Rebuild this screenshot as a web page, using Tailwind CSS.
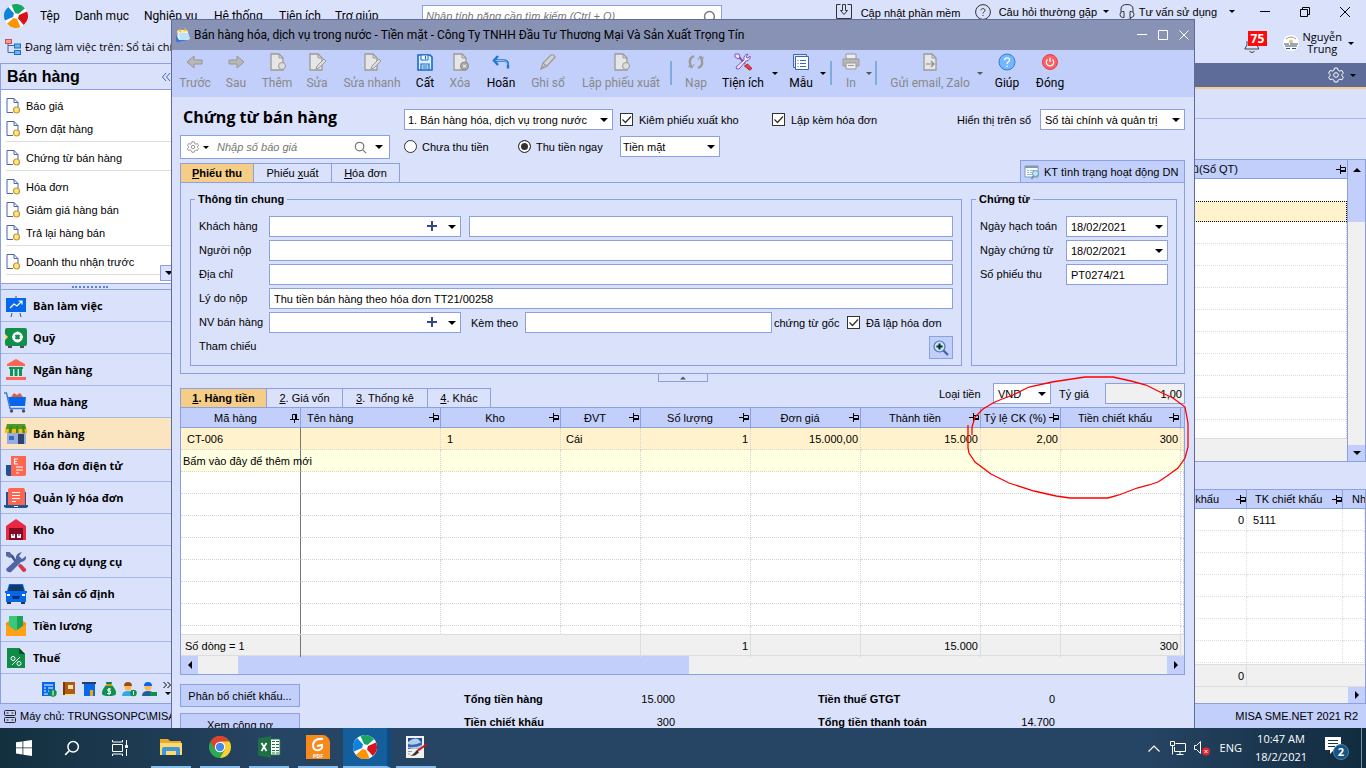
<!DOCTYPE html>
<html lang="vi">
<head>
<meta charset="utf-8">
<title>MISA SME.NET 2021 - Bán hàng</title>
<script src="https://cdn.jsdelivr.net/npm/@tailwindcss/browser@4"></script>
</head>
<body class="flex h-screen flex-col overflow-hidden bg-[#dae1fb] font-['Liberation_Sans',sans-serif] text-[11px] leading-4 text-black">

<!-- Shared symbols -->
<svg class="hidden" aria-hidden="true">
  <symbol id="down" viewBox="0 0 8 4"><path d="M0 0h8L4 4z" fill="currentColor"/></symbol>
  <symbol id="pin" viewBox="0 0 10 9"><path d="M0 4.500h4M4.500 0v9M4.500 2.500h5v4" fill="none" stroke="#000"/><path d="M4 6h6" stroke="#000" stroke-width="2"/></symbol>
  <symbol id="pinned" viewBox="0 0 9 10"><path d="M4.500 6v4M0 6.500h9M2.500 6V1.500h4" fill="none" stroke="#000"/><path d="M6 1v5" stroke="#000" stroke-width="2"/></symbol>
  <symbol id="doc" viewBox="0 0 14 16"><path d="M.5 14.500V.5h7l4 4v5M.5 14.500h6M7.500.5v4h4" fill="#fff" stroke="#4a64ad"/><circle cx="10" cy="12" r="3" fill="#ffe48a" stroke="#c39a2c" stroke-width="1.200"/></symbol>
  <symbol id="page" viewBox="0 0 16 18"><path d="M1 1h8l4 4v12H1z" fill="#e6e6e6" stroke="#9a9a9a" stroke-width="1.300"/><path d="M9 1v4h4" fill="none" stroke="#9a9a9a"/></symbol>
  <symbol id="misa" viewBox="0 0 24 24"><circle cx="12" cy="12" r="12" fill="#fff"/><path d="M7.500 1A12 12 0 0 1 21 4.200L14.500 10 11 9z" fill="#17a765"/><path d="M23 7.500A12 12 0 0 1 19.800 21L14 14.500 15 11z" fill="#d8121b"/><path d="M16.500 23A12 12 0 0 1 3 19.800L9.500 14 13 15z" fill="#fd9305"/><path d="M1 16.500A12 12 0 0 1 4.200 3L10 9.500 9 13z" fill="#0d84dc"/></symbol>
  <symbol id="gear" viewBox="0 0 16 16"><path d="M6.500 1h3l.6 2.200 1.600.9 2.200-.6 1.500 2.600L13.800 7.700v1l1.600 1.500-1.500 2.600-2.200-.6-1.600.9L9.500 15h-3l-.6-2-1.600-.9-2.200.6L.6 10.200l1.600-1.500v-1L.6 6.100l1.500-2.600 2.200.6 1.600-.9z" fill="none" stroke="currentColor"/><circle cx="8" cy="8" r="2.300" fill="none" stroke="currentColor"/></symbol>
  <symbol id="lens" viewBox="0 0 14 14"><circle cx="6" cy="6" r="4.600" fill="none" stroke="currentColor" stroke-width="1.300"/><path d="M9.500 9.500L13 13" stroke="currentColor" stroke-width="1.300"/></symbol>
  <symbol id="plus" viewBox="0 0 10 10"><path d="M5 0v10M0 5h10" stroke="#34498a" stroke-width="2"/></symbol>
  <symbol id="tick" viewBox="0 0 13 13"><path d="M2.500 6.500l3 3 5.500-6" fill="none" stroke="#333" stroke-width="1.300"/></symbol>
</svg>

<div class="relative min-h-0 flex-1 overflow-hidden">

  <!-- Main application window -->
  <div class="flex h-full flex-col">
    <header class="flex h-[63px] shrink-0 justify-between">
      <div>
        <div class="flex h-8 items-center">
          <svg class="ml-1 size-6"><use href="#misa"/></svg>
          <nav class="ml-3 flex gap-4 font-['Roboto',sans-serif] text-[12px] whitespace-nowrap">
            <a href="#" class="w-[19px]">Tệp</a><a href="#" class="w-[53px]">Danh mục</a><a href="#" class="w-[54px]">Nghiệp vụ</a><a href="#" class="w-[49px]">Hệ thống</a><a href="#" class="w-10">Tiện ích</a><a href="#">Trợ giúp</a>
          </nav>
        </div>
        <div class="mt-1.5 flex h-[18px] items-center gap-1 pl-[5px] font-['Open_Sans',sans-serif] whitespace-nowrap">
          <svg class="size-4" viewBox="0 0 16 16" fill="none"><path d="M3 5v8.500h6M3 6.500h6" stroke="#3d62b5"/><rect x=".5" y=".5" width="6" height="4" fill="#f49a95" stroke="#c9524f"/><rect x="9.500" y="5" width="6" height="4" fill="#6db5f2" stroke="#1d6fc5"/><rect x="9.500" y="11.500" width="6" height="4" fill="#6db5f2" stroke="#1d6fc5"/></svg>
          <span>Đang làm việc trên: Sổ tài chính và quản trị</span>
        </div>
      </div>
      <div class="absolute top-[5px] left-[422px] flex h-6 w-[300px] items-start border border-[#8c9fe0] bg-white px-[3px]">
        <input aria-label="Tìm kiếm tính năng" placeholder="Nhập tính năng cần tìm kiếm (Ctrl + Q)" class="h-5 min-w-0 flex-1 text-[11px] italic outline-none placeholder:text-[#777]">
        <svg class="mt-1 size-[15px] text-[#777]"><use href="#lens"/></svg>
      </div>
      <div class="flex flex-col">
        <div class="flex h-6 items-center whitespace-nowrap">
          <svg class="mr-[9px] size-4" viewBox="0 0 16 16" fill="none" stroke="#333"><path d="M4.500.5h-4v14h15V.5h-4M6.500.5h3v6h2L8 10.500 4.500 6.500h2z"/></svg>
          <a href="#" class="mr-4 w-[98px] pt-0.5">Cập nhật phần mềm</a>
          <svg class="mr-2 size-4" viewBox="0 0 16 16" fill="none" stroke="#333"><circle cx="8" cy="8" r="7.400"/><path d="M6 6.300C6 4 10 4 10 6.300 10 8 8 7.800 8 9.500M8 11v1"/></svg>
          <a href="#" class="w-[96px]">Câu hỏi thường gặp</a>
          <svg class="mr-2.5 ml-2 h-[3px] w-[6px]"><use href="#down"/></svg>
          <svg class="mr-1 size-4" viewBox="0 0 16 16" fill="none" stroke="#333"><path d="M2 8V5q0-4.500 6-4.500T14 5v3M3.500 7.500h1.500v6H3.500Q1 13 1 10.500T3.500 7.500zM12.500 7.500H11v6h1.500Q15 13 15 10.500T12.500 7.500zM12 14q-1 1.500-4 1.500"/></svg>
          <a href="#">Tư vấn sử dụng</a>
          <svg class="mr-6 ml-3 h-[3px] w-[6px]"><use href="#down"/></svg>
          <button aria-label="Thu nhỏ" class="mr-7"><svg class="size-3" viewBox="0 0 12 12"><path d="M1 5.500h10" stroke="#000"/></svg></button>
          <button aria-label="Khôi phục" class="mr-7"><svg class="size-3" viewBox="0 0 12 12" fill="none" stroke="#000"><path d="M1.500 3.500h7v7h-7zM3.500 3V1.500h7v7H9"/></svg></button>
          <button aria-label="Đóng chương trình" class="mr-[15px]"><svg class="size-3" viewBox="0 0 12 12" stroke="#000"><path d="M1 1l10 10M11 1L1 11"/></svg></button>
        </div>
        <div class="flex h-10 items-center justify-end pr-3">
          <div class="relative mr-[15px] h-6 w-6">
            <svg class="absolute top-2 left-0 h-4 w-4" viewBox="0 0 16 16" fill="none" stroke="#444"><path d="M3 2v4L.8 10h14L13 6M5.500 12.500q2.500 2 5 0"/></svg>
            <span class="absolute top-0 left-1 bg-[#ff0a0a] px-[3px] font-['Open_Sans',sans-serif] text-[12px] leading-[15px] font-bold text-white">75</span>
          </div>
          <svg class="mr-1 size-4" viewBox="0 0 16 16"><circle cx="8" cy="8" r="8" fill="#fff"/><path d="M3 4q5-4 10 0" fill="none" stroke="#999"/><circle cx="8" cy="6.500" r="2" fill="#e9c869"/><path d="M1 9h5m1 0h8M2 11h12M3 13.500h4m2 0h4" stroke="#33507f"/></svg>
          <div class="mr-1.5 flex flex-col text-center font-['Open_Sans',sans-serif] text-[11px] leading-3"><span>Nguyễn</span><span>Trung</span></div>
          <svg class="h-[3px] w-[6px]"><use href="#down"/></svg>
        </div>
      </div>
    </header>

    <div class="flex min-h-0 flex-1">
      <!-- Sidebar -->
      <aside class="flex w-[180px] shrink-0 flex-col border border-[#8c9fe0]">
        <div class="flex h-[26px] shrink-0 items-center justify-between border-b border-[#8c9fe0] pr-2 pl-1.5">
          <h2 class="text-[16px] font-bold">Bán hàng</h2>
          <svg class="size-[10px]" viewBox="0 0 10 10" fill="none" stroke="#3e66bb"><path d="M5 1L1.500 5 5 9M9 1L5.500 5 9 9"/></svg>
        </div>
        <div class="relative h-[194px] shrink-0 border-b border-[#8c9fe0] bg-white pt-1 pl-[5px]">
          <div class="border-b border-[#ddd] pb-px [&>a]:flex [&>a]:h-[23px] [&>a]:items-center [&>a]:gap-[5px] [&_svg]:h-4 [&_svg]:w-[15px]">
            <a href="#"><svg><use href="#doc"/></svg>Báo giá</a>
            <a href="#"><svg><use href="#doc"/></svg>Đơn đặt hàng</a>
          </div>
          <div class="flex h-[29px] items-center gap-[5px] border-b border-[#ddd] pt-1"><svg class="h-4 w-[15px]"><use href="#doc"/></svg><a href="#">Chứng từ bán hàng</a></div>
          <div class="border-b border-[#ddd] pt-1 pb-px [&>a]:flex [&>a]:h-[23px] [&>a]:items-center [&>a]:gap-[5px] [&_svg]:h-4 [&_svg]:w-[15px]">
            <a href="#"><svg><use href="#doc"/></svg>Hóa đơn</a>
            <a href="#"><svg><use href="#doc"/></svg>Giảm giá hàng bán</a>
            <a href="#"><svg><use href="#doc"/></svg>Trả lại hàng bán</a>
          </div>
          <div class="flex h-[29px] items-center gap-[5px] border-b border-[#ddd] pt-1"><svg class="h-4 w-[15px]"><use href="#doc"/></svg><a href="#">Doanh thu nhận trước</a></div>
          <button aria-label="Cuộn xuống" class="absolute right-0 bottom-0.5 flex h-4 w-[19px] items-center border border-[#8c9fe0] bg-[#dae1fb] pl-1"><svg class="h-1 w-2"><use href="#down"/></svg></button>
        </div>
        <div class="flex h-[6px] shrink-0 items-center justify-center border-b border-[#8c9fe0]"><span class="h-0.5 w-9 border-t-2 border-dotted border-[#5d83cf]"></span></div>
        <nav class="font-['Open_Sans',sans-serif] text-[11px] font-bold [&>a]:flex [&>a]:h-8 [&>a]:items-center [&>a]:gap-[5px] [&>a]:border-b [&>a]:border-[#a5b8e8] [&>a]:pl-[3px] [&_svg]:size-6">
          <a href="#"><svg viewBox="0 0 24 24"><path d="M8 19l-1 4M16 19l1 4M12 2v4" stroke="#44546a"/><path d="M2 4h20v14H2z" fill="#0568ea"/><path d="M6 14l4-4 3 2 5-5M14.500 7H18v3.500" fill="none" stroke="#fff" stroke-width="1.200"/></svg>Bàn làm việc</a>
          <a href="#"><svg viewBox="0 0 24 24"><path d="M4 19h4v3H4zM16 19h4v3h-4z" fill="#4c4f57"/><rect x="1" y="2" width="22" height="18" rx="2" fill="#11904c"/><path d="M1 8v6l3-3z" fill="#ffe34a"/><circle cx="13.500" cy="11" r="4" fill="none" stroke="#fff" stroke-width="2.500"/><path d="M13.500 5.500v11M8 11h11" stroke="#fff" stroke-width="1.500"/><circle cx="13.500" cy="11" r="2.200" fill="#11904c"/></svg>Quỹ</a>
          <a href="#"><svg viewBox="0 0 24 24"><path d="M12 1l9 5v2H3V6zM2 19h20v3H2z" fill="#ff6550"/><path d="M5 9h14v2h-1v7h-3v-7h-1.500v7h-3v-7H9v7H6v-7H5z" fill="#119353"/></svg>Ngân hàng</a>
          <a href="#"><svg viewBox="0 0 24 24"><path d="M7 7l3-4 3 2 3-2 3 4z" fill="#e25a4b"/><path d="M4 7h18l-1 9H6z" fill="#0568ea"/><path d="M0 3h2.500L6 18.500h15" fill="none" stroke="#3b7bd8" stroke-width="1.400"/><circle cx="7.500" cy="21" r="1.700" fill="#4c4f57"/><circle cx="19.500" cy="21" r="1.700" fill="#4c4f57"/></svg>Mua hàng</a>
          <a href="#" class="bg-[#fbe5c0]"><svg viewBox="0 0 24 24"><path d="M3 9h19v13H3z" fill="#98acdf"/><path d="M5 14h5v4H5z" fill="#3a6bc2"/><path d="M14 12h6v10h-6z" fill="#31416e"/><path d="M3 2h18l2 7v2H1V9z" fill="#4b9c26"/><path d="M1 7h22v4H1z" fill="#ffb90f"/><path d="M5.500 4h3l-1 7h-3zM12 4h2.500v7H12zM18 4h2l1 7h-2.500z" fill="#3f8a20"/></svg>Bán hàng</a>
          <a href="#"><svg viewBox="0 0 24 24"><path d="M2 11h7v11H4q-2 0-2-2z" fill="#1d5594"/><path d="M7 2h15v18q0 2-2 2H7z" fill="#ff6550"/><path d="M10 5h4M10.500 5v5M10 7.500h3M10 10h4M12 13h7M12 16h7M12 19h3" stroke="#fff" stroke-width="1.200"/></svg>Hóa đơn điện tử</a>
          <a href="#"><svg viewBox="0 0 24 24"><path d="M2 6h20v14H2zM0 19h24v2l-2 1H2l-2-1z" fill="#1d5594"/><path d="M4 3l2-1h14l1 2v15H4z" fill="#ff6550"/><path d="M8 6.500h8M8 9.500h8M8 12.500h8M8 15.500h4M10 20.500h4" stroke="#fff"/></svg>Quản lý hóa đơn</a>
          <a href="#"><svg viewBox="0 0 24 24"><path d="M2 8l10-7 10 7v14H2z" fill="#ea2844"/><path d="M5 10h14v12H5z" fill="#820b23"/><path d="M7 16h4v4H7zM13 16h4v4h-4z" fill="#fff"/><path d="M9 16v2M15 16v2" stroke="#820b23"/></svg>Kho</a>
          <a href="#"><svg viewBox="0 0 24 24"><path d="M3 3l5 3 4 6M15 15l2 1" stroke="#41578f" stroke-width="2.500"/><path d="M2 2h4l2 4-2 2-4-2z" fill="#55699e"/><path d="M22 6q1 5-5 6L7 22q-4 1-5-3l10-9q-1-7 6-8l-3 4 3 3z" fill="#4f65a4"/><path d="M14 16l3-2 5 5q1 3-3 3z" fill="#da3548"/></svg>Công cụ dụng cụ</a>
          <a href="#"><svg viewBox="0 0 24 24"><path d="M3 18h4v4H3zM17 18h4v4h-4z" fill="#243447"/><path d="M5 2h14l2 7h2v2h-1v9H2v-9H1V9h2z" fill="#0568ea"/><path d="M6 3h12l2 6H4z" fill="#113b66"/><path d="M8 14h8l-1 3H9z" fill="#08305c"/><path d="M3 12h3v2H3zM18 12h3v2h-3z" fill="#fff"/></svg>Tài sản cố định</a>
          <a href="#"><svg viewBox="0 0 24 24"><path d="M2 9l3-2v-1h14v1l3 2v13H2z" fill="#ef9100"/><path d="M5 2h14v10l-7 5-7-5z" fill="#39c97d"/><path d="M13 2h6v10l-6 4z" fill="#209f5a"/><path d="M2 10l10 7L22 10v12H2z" fill="#ffa016"/></svg>Tiền lương</a>
          <a href="#"><svg viewBox="0 0 24 24"><path d="M3 2h12l6 6v14H3z" fill="#0f8d48"/><path d="M15 2v6h6z" fill="#075026"/><path d="M8 19l8-8" stroke="#fff"/><circle cx="9" cy="12.500" r="2" fill="none" stroke="#fff"/><circle cx="15" cy="17.500" r="2" fill="none" stroke="#fff"/></svg>Thuế</a>
        </nav>
        <div class="flex flex-1 items-center gap-1 pl-10 [&_svg]:size-4 [&_svg]:shrink-0">
          <svg viewBox="0 0 16 16"><path d="M1 1h13v14H1z" fill="#0568ea"/><path d="M3 4h9M3 7h2m2 0h5M3 10h2m2 0h1M3 13h4" stroke="#fff"/><circle cx="12" cy="12" r="3.700" fill="#11904c"/><path d="M12 9.500v5" stroke="#fff"/></svg>
          <svg viewBox="0 0 16 16"><path d="M2 1h12v13H2z" fill="#b05a13"/><path d="M2 13h12v2H2z" fill="#eee0b0"/><path d="M7 4h5v4H7z" fill="#ffe6b5"/><path d="M2 1h2v13H2z" fill="#793a08"/></svg>
          <svg viewBox="0 0 16 16"><path d="M1 1h14v2H1z" fill="#263c75"/><path d="M3 3h11v12H3z" fill="#0568ea"/><path d="M9 9h3v6H9z" fill="#ff9f13"/></svg>
          <svg viewBox="0 0 16 16"><path d="M5 1h6l-1 4H6z" fill="#0e7c43"/><path d="M5 4h6q5 6 4 9-1 2-7 2T1 13q-1-3 4-9z" fill="#11904c"/><path d="M5 4h6" stroke="#ff9f13" stroke-width="1.500"/><path d="M10 8H7v2h2.500v2.500H6M8 7v7" fill="none" stroke="#fff"/></svg>
          <svg viewBox="0 0 16 16"><path d="M1 15q0-5 6-5t6 5z" fill="#31a9e5"/><circle cx="7" cy="6" r="3.500" fill="#ffb84f"/><path d="M3 5q0-4 4-4t4 4z" fill="#a14c10"/><circle cx="12.500" cy="12" r="3.300" fill="#11904c"/><path d="M12.500 10v4" stroke="#fff"/></svg>
          <svg viewBox="0 0 16 16"><path d="M1 15q0-5 6-5t6 5z" fill="#1c5f9e"/><circle cx="7" cy="6" r="3.500" fill="#ffb84f"/><path d="M3 5q0-4 4-4t4 4z" fill="#0568ea"/><path d="M9 11h7v4H9z" fill="#11904c"/></svg>
          <svg viewBox="0 0 16 16" fill="none" stroke="#000"><path d="M2.500 1l3 3-3 3M6.500 1l3 3-3 3"/><path d="M4 11h6l-3 3z" fill="#000" stroke="none"/></svg>
        </div>
      </aside>

      <!-- Background list behind the voucher window -->
      <main class="flex min-w-0 flex-1 flex-col">
        <div class="flex h-[26px] shrink-0 items-center justify-end border-b-2 border-[#f5cd87] bg-[#5e6c99] pr-2.5 text-white">
          <svg class="mr-1.5 size-4"><use href="#gear"/></svg>
          <svg class="h-[3px] w-[6px] text-black"><use href="#down"/></svg>
        </div>
        <div class="h-[30px] shrink-0 border-b border-[#a9baf0]"></div>
        <div class="h-10 shrink-0"></div>
        <div class="flex h-[303px] shrink-0 border-y border-r border-[#8c9fe0] bg-white">
          <div class="flex min-w-0 flex-1 flex-col">
            <div class="flex h-[19px] shrink-0 items-center justify-end border-b border-[#8c9fe0] bg-[#c2cffa] pr-px">
              <span class="mr-[98px]">cũ(Sổ QT)</span><svg class="h-[9px] w-[10px]"><use href="#pin"/></svg>
            </div>
            <div class="h-[22px] shrink-0"></div>
            <div class="h-[21px] shrink-0 border border-dotted border-black bg-[#fff2cd]"></div>
            <div id="list-rows" class="min-h-0 flex-1 overflow-hidden border-r border-dotted border-[#ccc] [&>div]:h-[22px] [&>div]:border-b [&>div]:border-dotted [&>div]:border-[#ddd]"></div>
            <div class="h-[23px] shrink-0 border-t border-[#ddd] bg-[#f0f0f0]"></div>
          </div>
          <div class="flex w-[18px] flex-col border-l border-[#8c9fe0] bg-[#f0f0f0]">
            <div class="flex h-[19px] items-center justify-center bg-[#c2cffa]"><svg class="h-1 w-2 rotate-180"><use href="#down"/></svg></div>
            <div class="h-[43px] bg-[#c2cffa]"></div>
            <div class="mt-auto flex h-4 items-center justify-center bg-[#c2cffa]"><svg class="h-1 w-2"><use href="#down"/></svg></div>
          </div>
        </div>
        <div class="h-[27px] shrink-0"></div>
        <div class="flex min-h-0 flex-1 flex-col border border-[#8c9fe0] bg-white">
          <div class="flex h-[19px] shrink-0 justify-end border-b border-[#8c9fe0] bg-[#c2cffa] [&>div]:flex [&>div]:items-center [&>div]:border-r [&>div]:border-[#8c9fe0]">
            <div><span class="mr-[17px]">khấu</span><svg class="h-[9px] w-[10px]"><use href="#pin"/></svg></div>
            <div class="w-24 justify-between pl-2"><span>TK chiết khấu</span><svg class="h-[9px] w-[10px]"><use href="#pin"/></svg></div>
            <span class="w-[22px] overflow-hidden pt-px pl-[9px]">Nhóm</span>
          </div>
          <div class="flex min-h-0 flex-1 justify-end">
            <div id="detail-rows" class="grid flex-1 auto-rows-[22px] grid-cols-[1fr_96px_22px] content-start overflow-hidden [&>div]:border-r [&>div]:border-b [&>div]:border-dotted [&>div]:border-[#ddd] [&>div]:leading-[22px]">
              <div class="pr-0.5 text-right">0</div><div class="pl-1.5">5111</div><div></div>
            </div>
          </div>
          <div class="grid h-[23px] shrink-0 grid-cols-[1fr_118px] border-y border-[#ddd] bg-[#f0f0f0] leading-[22px]"><div class="border-r border-[#ddd] pr-0.5 text-right">0</div></div>
          <div class="flex h-4 shrink-0 justify-end bg-[#f0f0f0]"><div class="flex w-[17px] items-center justify-center bg-[#c2cffa]"><svg class="h-1 w-2 -rotate-90"><use href="#down"/></svg></div></div>
        </div>
      </main>
    </div>

    <footer class="flex h-6 shrink-0 items-center justify-between bg-[#c2cffa] pr-2 pl-1">
      <div class="flex items-center gap-1">
        <svg class="h-[13px] w-3" viewBox="0 0 12 13" fill="none" stroke="#222"><rect x=".5" y=".5" width="11" height="5" rx="1"/><rect x=".5" y="7.500" width="11" height="5" rx="1"/><path d="M2.500 3h2m3 0h2M2.500 10h2m3 0h2"/></svg>
        <span class="whitespace-nowrap">Máy chủ: TRUNGSONPC\MISA</span>
      </div>
      <span>MISA SME.NET 2021 R2</span>
    </footer>
  </div>

  <!-- Voucher window -->
  <section class="absolute inset-x-[171px] top-[19px] h-[720px] border border-[#5e6c99] bg-[#dae1fb]">
    <div class="flex h-[30px] items-center bg-[#8792b5] px-1">
      <svg class="mr-1 size-3.5" viewBox="0 0 14 14"><path d="M2 2h9l3 9-10 3H1z" fill="#edf6ff"/><path d="M1 3l10-1 .6 2L1 5z" fill="#ffe48a"/><path d="M3 5h9l1.500 6L4 13z" fill="#bfe0fb"/><path d="M0 7l3 5h9l-8 2H0z" fill="#3877d4"/><path d="M4 1v3M9 0v3" stroke="#f0b429" stroke-width="1.500"/></svg>
      <h1 class="flex-1 font-['Roboto',sans-serif] text-[12px]">Bán hàng hóa, dịch vụ trong nước - Tiền mặt - Công Ty TNHH Đầu Tư Thương Mại Và Sản Xuất Trọng Tín</h1>
      <div class="flex gap-[9px]">
        <button aria-label="Thu nhỏ cửa sổ"><svg class="size-3" viewBox="0 0 12 12"><path d="M1 5.500h10" stroke="#fff"/></svg></button>
        <button aria-label="Phóng to cửa sổ"><svg class="size-3" viewBox="0 0 12 12"><path d="M1.500 1.500h9v9h-9z" fill="none" stroke="#fff"/></svg></button>
        <button aria-label="Đóng cửa sổ"><svg class="size-3" viewBox="0 0 12 12"><path d="M1.500 1.500l9 9M10.500 1.500l-9 9" stroke="#fff"/></svg></button>
      </div>
    </div>

    <!-- Toolbar -->
    <div class="flex h-[47px] items-start bg-[#c2cffa] pt-[3px] font-['Roboto',sans-serif] text-[12px] whitespace-nowrap [&>button]:flex [&>button]:flex-col [&>button]:items-center [&>button]:gap-1 [&>button:disabled]:text-[#888] [&>button>svg]:size-[18px]">
      <button disabled class="ml-1 w-[38px]"><svg viewBox="0 0 18 18"><path d="M1 9l7-6v4h8v4H8v4z" fill="#b8b8b8" stroke="#969696"/></svg>Trước</button>
      <button disabled class="ml-0.5 w-10"><svg viewBox="0 0 18 18"><path d="M17 9l-7-6v4H2v4h8v4z" fill="#b8b8b8" stroke="#969696"/></svg>Sau</button>
      <button disabled class="w-[42px]"><svg viewBox="-2 0 18 18"><use href="#page" width="16" height="18"/><circle cx="12" cy="13" r="3.500" fill="#ddd" stroke="#999"/></svg>Thêm</button>
      <button disabled class="w-[38px]"><svg viewBox="-1 0 18 18"><use href="#page" width="16" height="18"/><path d="M7 16l1-3 7-7 2 2-7 7z" fill="#ddd" stroke="#999"/></svg>Sửa</button>
      <button disabled class="w-[72px]"><svg viewBox="-1 0 18 18"><use href="#page" width="16" height="18"/><path d="M7 16l1-3 7-7 2 2-7 7z" fill="#ddd" stroke="#999"/></svg>Sửa nhanh</button>
      <button class="w-[34px]"><svg viewBox="-1 0 18 18"><path d="M1 2h12l2 2v13H1z" fill="#dbeeff" stroke="#1769c6" stroke-width="1.600"/><path d="M4 2h7v5H4z" fill="#fff" stroke="#1769c6"/><path d="M8.500 3v3M4 17v-6h8v6M5.500 13h5M5.500 15h5" fill="none" stroke="#1769c6" stroke-width="1.200"/></svg>Cất</button>
      <button disabled class="w-9"><svg viewBox="-2 0 18 18"><use href="#page" width="16" height="18"/><circle cx="11.500" cy="13" r="4" fill="#aaa" stroke="#888"/><path d="M10 11.500l3 3m0-3l-3 3" stroke="#fff"/></svg>Xóa</button>
      <button class="w-[46px]"><svg viewBox="0 0 18 18"><path d="M6 3L2 7.500 6 12M2 7.500h9q5 0 5 4v4" fill="none" stroke="#2373d5" stroke-width="2.400"/><path d="M3.500 7.500H11q4 0 4.500 4" fill="none" stroke="#a6d2ff" stroke-width=".8"/></svg>Hoãn</button>
      <button disabled class="w-12"><svg viewBox="0 0 18 18"><path d="M2 16l2-6 8-8q3-1 4 2L8 13z" fill="#d4d4d4" stroke="#999" stroke-width="1.200"/><path d="M4 10l4 3M2 16l5-5" stroke="#999"/></svg>Ghi sổ</button>
      <button disabled class="w-[98px]"><svg viewBox="-2 0 18 18"><use href="#page" width="16" height="18"/><circle cx="12" cy="13" r="3.500" fill="#ddd" stroke="#999"/></svg>Lập phiếu xuất</button>
      <span class="mt-2 h-6 w-0.5 bg-[#7fabdf]"></span>
      <button disabled class="ml-2 w-8"><svg viewBox="0 0 18 18" fill="none" stroke="#999" stroke-width="2.400"><path d="M7 3Q2 5 3 10l1 4M11 15q5-2 4-7l-1-4"/><path d="M1 13l4 2 2-4M17 5l-4-2-2 4" stroke-width="1"/></svg>Nạp</button>
      <button class="ml-0.5 w-[58px]"><svg viewBox="0 0 18 18"><path d="M2 3l4 2 5 6" stroke="#7755b5" stroke-width="2" fill="none"/><path d="M1 1h4l1 3-2 2-3-2zM16 3q1 4-4 5l-7 8q-3 1-3-2l8-7Q9 2 14 1l-2 3 2 1z" fill="#eee3ff" stroke="#8158ae"/><path d="M10.500 13l3-2 4 4q0 2-2 2z" fill="#ea3c43" stroke="#aa2430"/></svg>Tiện ích</button>
      <svg class="mt-[19px] h-[3px] w-[6px]"><use href="#down"/></svg>
      <button class="ml-[5px] w-9"><svg viewBox="0 0 18 18"><path d="M1.500 1.500h13v13h-13z" fill="#dfe8ff" stroke="#3f64b4"/><path d="M3.500 3.500h13v13h-13z" fill="#fff" stroke="#3f64b4"/><path d="M5.500 7.500h1m1.500 0h6M5.500 10.500h1m1.500 0h6M5.500 13.500h1m1.500 0h6" stroke="#3f64b4"/></svg>Mẫu</button>
      <svg class="mt-[19px] ml-px h-[3px] w-[6px]"><use href="#down"/></svg>
      <span class="mt-2 ml-1 h-6 w-0.5 bg-[#7fabdf]"></span>
      <button disabled class="ml-[5px] w-7"><svg viewBox="0 0 18 18"><path d="M4 1h10v5H4z" fill="#eee" stroke="#999"/><path d="M1 6h16v7H1z" fill="#b8b8b8" stroke="#999"/><path d="M4 10h10v6H4z" fill="#eee" stroke="#999"/><path d="M6 12.500h6" stroke="#999"/></svg>In</button>
      <svg class="mt-[19px] ml-px h-[3px] w-[6px] text-[#555]"><use href="#down"/></svg>
      <span class="mt-2 ml-[3px] h-6 w-0.5 bg-[#7fabdf]"></span>
      <button disabled class="ml-3 w-[82px]"><svg viewBox="0 0 18 18"><use href="#page" x="2" width="16" height="18"/><path d="M5 11h8M10 8l3 3-3 3" fill="none" stroke="#888" stroke-width="1.200"/></svg>Gửi email, Zalo</button>
      <svg class="mt-[19px] ml-1.5 h-[3px] w-[6px] text-[#555]"><use href="#down"/></svg>
      <button class="ml-1 w-10"><svg viewBox="0 0 18 18"><circle cx="9" cy="9" r="8" fill="#74b6ff" stroke="#347ed5"/><path d="M6.500 7.300C6.500 4 11.500 4 11.500 7c0 2-2.500 2-2.500 4M9 12.500V14" fill="none" stroke="#fff" stroke-width="1.300"/></svg>Giúp</button>
      <button class="w-[46px]"><svg viewBox="0 0 18 18"><circle cx="9" cy="9" r="7.500" fill="#fc5e61" stroke="#e34045"/><path d="M6.500 6.500a3.700 3.700 0 1 0 5 0M9 4.500V9" fill="none" stroke="#fff" stroke-width="1.300"/></svg>Đóng</button>
    </div>

    <div class="pr-[9px] pl-2">
      <!-- Voucher type -->
      <div class="flex pt-3">
        <div class="w-[224px] shrink-0">
          <h2 class="h-[26px] pl-[3px] font-['Open_Sans',sans-serif] text-[16px] font-bold whitespace-nowrap">Chứng từ bán hàng</h2>
          <div class="flex h-6 w-[210px] items-center border border-[#8c9fe0] bg-white px-1.5">
            <svg class="mr-1 size-3 text-[#777]"><use href="#gear"/></svg><svg class="mr-2 h-[3px] w-[6px]"><use href="#down"/></svg>
            <input aria-label="Nhập số báo giá" placeholder="Nhập số báo giá" class="min-w-0 flex-1 text-[11px] italic outline-none placeholder:text-[#777]">
            <svg class="mr-2 size-[13px] text-[#777]"><use href="#lens"/></svg><svg class="h-1 w-2"><use href="#down"/></svg>
          </div>
        </div>
        <div class="flex-1">
          <div class="flex items-center">
            <div class="relative mr-[7px] w-[209px]"><select aria-label="Loại chứng từ" class="block h-[21px] w-full appearance-none border border-[#8c9fe0] bg-white pl-[3px] outline-none"><option>1. Bán hàng hóa, dịch vụ trong nước</option></select><svg class="pointer-events-none absolute top-[9px] right-[5px] h-1 w-2"><use href="#down"/></svg></div>
            <label class="flex w-[152px] items-center gap-1.5"><span class="relative size-[13px]"><input type="checkbox" checked class="block size-[13px] appearance-none border border-[#333] bg-white"><svg class="absolute inset-0 size-[13px]"><use href="#tick"/></svg></span>Kiêm phiếu xuất kho</label>
            <label class="flex items-center gap-1.5"><span class="relative size-[13px]"><input type="checkbox" checked class="block size-[13px] appearance-none border border-[#333] bg-white"><svg class="absolute inset-0 size-[13px]"><use href="#tick"/></svg></span>Lập kèm hóa đơn</label>
            <label for="book" class="mr-[9px] ml-auto">Hiển thị trên sổ</label>
            <div class="relative w-[145px]"><select id="book" class="block h-[21px] w-full appearance-none border border-[#8c9fe0] bg-white pl-1 outline-none"><option>Sổ tài chính và quản trị</option></select><svg class="pointer-events-none absolute top-[9px] right-[5px] h-1 w-2"><use href="#down"/></svg></div>
          </div>
          <div class="mt-1.5 flex items-center">
            <label class="flex w-[114px] items-center gap-[5px]"><input type="radio" name="pay" class="size-[13px] appearance-none rounded-full border border-[#333] bg-white">Chưa thu tiền</label>
            <label class="flex w-[102px] items-center gap-[5px]"><input type="radio" name="pay" checked class="size-[13px] appearance-none rounded-full border border-[#333] bg-[#333] shadow-[inset_0_0_0_2px_#fff]">Thu tiền ngay</label>
            <div class="relative w-[100px]"><select aria-label="Hình thức thanh toán" class="block h-[21px] w-full appearance-none border border-[#8c9fe0] bg-white pl-0.5 outline-none"><option>Tiền mặt</option></select><svg class="pointer-events-none absolute top-[9px] right-[5px] h-1 w-2"><use href="#down"/></svg></div>
          </div>
        </div>
      </div>

      <!-- Voucher header panel -->
      <div class="mt-px flex h-[22px] items-end">
        <button class="h-[19px] w-[74px] border-x border-t border-[#8c9fe0] bg-[#f5cd87] font-bold"><u>P</u>hiếu thu</button>
        <button class="h-[19px] w-[78px] border-t border-r border-[#8c9fe0]">Phiếu <u>x</u>uất</button>
        <button class="h-[19px] w-[68px] border-t border-r border-[#8c9fe0]"><u>H</u>óa đơn</button>
        <button class="ml-auto flex h-[22px] w-[165px] items-center gap-1 border border-b-0 border-[#8c9fe0] bg-[#c2cffa] pl-[3px] whitespace-nowrap"><svg class="size-4 shrink-0" viewBox="0 0 16 16"><path d="M1 2h13v11H1z" fill="#fff" stroke="#7e9bb0"/><path d="M1 3h13" stroke="#7e9bb0" stroke-width="2"/><path d="M3 6.500h2m1 0h4M3 8.500h2m1 0h2M3 10.500h5" stroke="#8cb5df"/><circle cx="11.500" cy="9.500" r="3" fill="#bfe5fa" stroke="#5f90ad"/><path d="M9.500 12l-2 3" stroke="#5f90ad" stroke-width="1.500"/></svg>KT tình trạng hoạt động DN</button>
      </div>
      <div class="flex h-[192px] gap-[9px] border border-[#8c9fe0] pt-2 pr-[7px] pl-[9px]">
        <fieldset class="h-[175px] min-w-0 flex-1 border border-[#8c9fe0] px-2">
          <legend class="-ml-1 px-[3px] font-bold">Thông tin chung</legend>
          <div class="grid grid-cols-[70px_1fr] gap-y-[3px] pt-[9px] [&_input]:h-[21px] [&_input]:min-w-0 [&_input]:border [&_input]:border-[#8c9fe0] [&_input]:bg-white [&_input]:px-1 [&_input]:outline-none [&>label]:leading-[21px]">
            <label for="cust">Khách hàng</label>
            <div class="flex gap-2"><div class="relative"><input id="cust" class="block w-48"><svg class="absolute top-[5px] right-6 size-[10px]"><use href="#plus"/></svg><svg class="absolute top-[9px] right-[5px] h-1 w-2"><use href="#down"/></svg></div><input aria-label="Tên khách hàng" class="flex-1"></div>
            <label for="payer">Người nộp</label><input id="payer">
            <label for="addr">Địa chỉ</label><input id="addr">
            <label for="reason">Lý do nộp</label><input id="reason" value="Thu tiền bán hàng theo hóa đơn TT21/00258">
            <label for="seller" class="whitespace-nowrap">NV bán hàng</label>
            <div class="flex items-center"><div class="relative"><input id="seller" class="block w-48"><svg class="absolute top-[5px] right-6 size-[10px]"><use href="#plus"/></svg><svg class="absolute top-[9px] right-[5px] h-1 w-2"><use href="#down"/></svg></div>
              <label for="attach" class="ml-2.5 w-[54px]">Kèm theo</label><input id="attach" class="flex-1"><span class="ml-0.5 w-[73px]">chứng từ gốc</span>
              <label class="flex w-[106px] items-center gap-1.5"><span class="relative size-[13px]"><input type="checkbox" checked class="block size-[13px]! appearance-none border-[#333]! p-0!"><svg class="absolute inset-0 size-[13px]"><use href="#tick"/></svg></span>Đã lập hóa đơn</label>
            </div>
            <span class="leading-[21px]">Tham chiếu</span>
            <button aria-label="Chọn tham chiếu" class="ml-auto grid h-[23px] w-6 place-items-center border border-[#8c9fe0] bg-[#c2cffa]"><svg class="size-4" viewBox="0 0 16 16"><circle cx="6.500" cy="6.500" r="5.500" fill="#bfe8fb" stroke="#4d73a9" stroke-width="1.200"/><path d="M6.500 3.500v6M3.500 6.500h6" stroke="#222" stroke-width="2"/><path d="M10.500 10.500L15 15" stroke="#4560a5" stroke-width="2.200"/></svg></button>
          </div>
        </fieldset>
        <fieldset class="h-[175px] w-[206px] border border-[#8c9fe0] px-2">
          <legend class="-ml-1 px-[3px] font-bold">Chứng từ</legend>
          <div class="grid grid-cols-[86px_1fr] gap-y-[3px] pt-[9px] [&_input]:block [&_input]:h-[21px] [&_input]:w-full [&_input]:border [&_input]:border-[#8c9fe0] [&_input]:bg-white [&_input]:px-1 [&_input]:outline-none [&>label]:leading-[21px]">
            <label for="d1">Ngày hạch toán</label><div class="relative"><input id="d1" value="18/02/2021"><svg class="absolute top-[9px] right-[5px] h-1 w-2"><use href="#down"/></svg></div>
            <label for="d2">Ngày chứng từ</label><div class="relative"><input id="d2" value="18/02/2021"><svg class="absolute top-[9px] right-[5px] h-1 w-2"><use href="#down"/></svg></div>
            <label for="no">Số phiếu thu</label><input id="no" value="PT0274/21">
          </div>
        </fieldset>
      </div>
      <button aria-label="Thu gọn" class="mx-auto flex h-2 w-[50px] items-center justify-center border border-t-0 border-[#8c9fe0]"><svg class="h-1 w-1.5 rotate-180 text-[#555]"><use href="#down"/></svg></button>

      <!-- Detail grid -->
      <div class="flex h-[25px] items-end">
        <button class="h-[19px] w-[87px] border-x border-t border-[#8c9fe0] bg-[#f5cd87] font-bold"><u>1</u>. Hàng tiền</button>
        <button class="h-[19px] w-[76px] border-t border-r border-[#8c9fe0]"><u>2</u>. Giá vốn</button>
        <button class="h-[19px] w-[85px] border-t border-r border-[#8c9fe0]"><u>3</u>. Thống kê</button>
        <button class="h-[19px] w-[63px] border-t border-r border-[#8c9fe0]"><u>4</u>. Khác</button>
        <div class="mb-[3px] ml-auto flex items-center">
          <label for="cur" class="w-[54px]">Loại tiền</label>
          <div class="relative w-[58px]"><select id="cur" class="block h-[21px] w-full appearance-none border border-[#8c9fe0] bg-white pl-1 outline-none"><option>VND</option></select><svg class="pointer-events-none absolute top-[9px] right-[5px] h-1 w-2"><use href="#down"/></svg></div>
          <label for="rate" class="ml-2 w-[46px]">Tỷ giá</label>
          <input id="rate" value="1,00" readonly class="h-[21px] w-20 border border-[#8c9fe0] bg-[#f0f0f0] pr-0.5 text-right outline-none">
        </div>
      </div>
      <div class="border border-[#8c9fe0] bg-white">
        <div class="h-[248px] overflow-hidden">
        <table class="w-full table-fixed border-separate border-spacing-0 whitespace-nowrap [&_tbody_td:first-child]:border-r-[#777] [&_tbody_td:first-child]:[border-right-style:solid] [&_td]:border-r [&_td]:border-b [&_td]:border-dotted [&_td]:border-[#d5d5d5] [&_td]:px-0.5 [&_th]:border-r [&_th]:border-b [&_th]:border-[#8c9fe0] [&_th]:bg-[#c2cffa] [&_th]:p-0 [&_th]:font-normal [&_tr]:h-[22px]">
          <colgroup><col class="w-[120px]"><col class="w-[140px]"><col class="w-[120px]"><col class="w-20"><col class="w-[110px]"><col class="w-[110px]"><col class="w-[120px]"><col class="w-20"><col class="w-[120px]"><col></colgroup>
          <thead><tr class="h-5! [&_div]:flex [&_div]:items-center [&_div]:pr-px [&_span]:flex-1 [&_svg]:h-[9px] [&_svg]:w-[10px]">
            <th><div><span>Mã hàng</span><svg class="h-[10px]! w-[9px]!"><use href="#pinned"/></svg></div></th>
            <th><div><span class="pl-1.5 text-left">Tên hàng</span><svg><use href="#pin"/></svg></div></th>
            <th><div><span>Kho</span><svg><use href="#pin"/></svg></div></th>
            <th><div><span>ĐVT</span><svg><use href="#pin"/></svg></div></th>
            <th><div><span>Số lượng</span><svg><use href="#pin"/></svg></div></th>
            <th><div><span>Đơn giá</span><svg><use href="#pin"/></svg></div></th>
            <th><div><span>Thành tiền</span><svg><use href="#pin"/></svg></div></th>
            <th><div><span>Tỷ lệ CK (%)</span><svg><use href="#pin"/></svg></div></th>
            <th><div><span>Tiền chiết khấu</span><svg><use href="#pin"/></svg></div></th>
            <th class="border-r-0!"></th>
          </tr></thead>
          <tbody id="grid-body">
            <tr class="bg-[#fff2cd]"><td class="pl-1.5!">CT-006</td><td></td><td class="pl-1.5!">1</td><td class="pl-[5px]!">Cái</td><td class="text-right">1</td><td class="text-right">15.000,00</td><td class="text-right">15.000</td><td class="text-right">2,00</td><td class="text-right">300</td><td></td></tr>
            <tr class="bg-[#ffffe1]"><td>Bấm vào đây để thêm mới</td><td></td><td></td><td></td><td></td><td></td><td></td><td></td><td></td><td></td></tr>
            <tr id="blank-row"><td></td><td></td><td></td><td></td><td></td><td></td><td></td><td></td><td></td><td></td></tr>
          </tbody>
        </table>
        </div>
        <div class="relative -mt-[22px] grid h-[22px] grid-cols-[120px_340px_110px_110px_120px_80px_120px_1fr] border-y border-[#ddd] bg-[#f0f0f0] leading-[22px] [&>div]:border-r [&>div]:border-[#ddd] [&>div]:px-0.5 [&>div]:text-right">
          <div class="border-[#777]! pl-1! text-left!">Số dòng = 1</div><div></div><div>1</div><div></div><div>15.000</div><div></div><div>300</div>
        </div>
        <div class="flex h-[18px] bg-[#f0f0f0]">
          <div class="flex w-[17px] items-center justify-center bg-[#c2cffa]"><svg class="h-1 w-2 rotate-90"><use href="#down"/></svg></div>
          <div class="ml-10 w-[451px] bg-[#c2cffa]"></div>
          <div class="ml-auto flex w-[17px] items-center justify-center bg-[#c2cffa]"><svg class="h-1 w-2 -rotate-90"><use href="#down"/></svg></div>
        </div>
      </div>

      <!-- Totals -->
      <div class="mt-[9px] flex">
        <div class="flex w-[120px] flex-col gap-1.5">
          <button class="h-[23px] border border-[#8c9fe0] bg-[#c2cffa]">Phân bổ chiết khấu...</button>
          <button class="h-[23px] border border-[#8c9fe0] bg-[#c2cffa]">Xem công nợ</button>
        </div>
        <dl class="mt-[3px] ml-[164px] grid auto-rows-[23px] grid-cols-[120px_91px_143px_120px_117px] items-center [&>dd]:text-right [&>dt]:font-bold">
          <dt>Tổng tiền hàng</dt><dd>15.000</dd><dt class="col-start-4">Tiền thuế GTGT</dt><dd>0</dd>
          <dt>Tiền chiết khấu</dt><dd>300</dd><dt class="col-start-4">Tổng tiền thanh toán</dt><dd>14.700</dd>
        </dl>
      </div>
    </div>

    <!-- Hand-drawn highlight -->
    <svg class="pointer-events-none absolute top-[350px] left-[788px] h-[140px] w-[240px]" viewBox="960 370 240 140"><path d="M968 425V448L969 453 975 462 991 474 1009 483 1034 491 1056 496 1070 498H1108L1119 495 1137 488 1149 485 1158 482 1167 476 1178 468 1185 458 1188 447V423L1185 407 1173 398 1160 392 1146 385 1131 381 1113 377H1085L1052 382 1029 387 1013 395 1002 399 993 403 983 409 975 417 972 427V435" fill="none" stroke="#f00" stroke-width="1.300"/></svg>
  </section>
</div>

<!-- Taskbar -->
<div class="flex h-10 shrink-0 items-stretch justify-between bg-linear-to-r from-[#13303f] via-[#264463] via-20% to-[#264463] to-75% font-['Open_Sans',sans-serif] text-[11px] text-white">
  <div class="flex [&>button]:flex [&>button]:items-center [&>button]:justify-center">
    <button aria-label="Start" class="w-12"><svg class="size-4" viewBox="0 0 16 16"><path d="M0 2.300l6.500-.9v6.100H0zM7.300 1.300L16 0v7.500H7.300zM0 8.300h6.500v6.200L0 13.600zM7.300 8.300H16V16l-8.700-1.300z" fill="#fff"/></svg></button>
    <button aria-label="Tìm kiếm" class="w-12"><svg class="size-4 -scale-x-100"><use href="#lens"/></svg></button>
    <button aria-label="Task View" class="w-12"><svg class="size-4" viewBox="0 0 16 16" fill="none" stroke="#fff"><path d="M.5 4.500h10v7H.5zM.5 0v2h10V0M.5 16v-2h10v2M14.500 0v5M14.500 9v7"/><path d="M13.500 5.500h2v2h-2z" fill="#fff"/></svg></button>
    <div class="ml-[7px] flex gap-[9px] [&>button]:flex [&>button]:w-10 [&>button]:items-center [&>button]:justify-center [&>button]:border-b-2 [&>button]:border-[#89bdec] [&>button>svg]:size-6">
      <button aria-label="File Explorer"><svg viewBox="0 0 24 24"><path d="M1 4h8l2 2h11v4H1z" fill="#e8a92e"/><path d="M1 8h22v12H1z" fill="#ffda6a"/><path d="M3 20v-6q0-2 2-2h14q2 0 2 2v6h-4v-4H7v4z" fill="#3f97da"/></svg></button>
      <button aria-label="Chrome"><svg viewBox="0 0 24 24"><circle cx="12" cy="12" r="11" fill="#2fa84f"/><path d="M2.500 6.500A11 11 0 0 1 21.500 6.500H12L7.200 14.700z" fill="#e4402f"/><path d="M21.500 6.500A11 11 0 0 1 12 23l4.800-8.200L12 6.500z" fill="#fdd032"/><circle cx="12" cy="12" r="5.200" fill="#fff"/><circle cx="12" cy="12" r="4.200" fill="#4688f1"/></svg></button>
      <button aria-label="Excel"><svg viewBox="0 0 24 24"><path d="M13 4h10v16H13z" fill="#fff" stroke="#1d7044"/><path d="M15 6.500h3m1 0h3M15 9.500h3m1 0h3M15 12.500h3m1 0h3M15 15.500h3m1 0h3M15 18h3m1 0h3" stroke="#1d7044"/><path d="M1 3.500L14 1v22L1 20.500z" fill="#1d7044"/><path d="M4.500 8l5 8M9.500 8l-5 8" stroke="#fff" stroke-width="1.800"/></svg></button>
      <button aria-label="Foxit PDF"><svg viewBox="0 0 24 24"><path d="M0 0h18l6 6v18H0z" fill="#f78a1c"/><path d="M19 0l5 4.500h-5z" fill="#f78a1c"/><path d="M17 4q-9-1-10 6 0 6 6 5 4-1 3-5l-5 1" fill="none" stroke="#fff" stroke-width="2"/><text x="12" y="22.500" text-anchor="middle" font-size="5.500" font-weight="bold" fill="#fff">PDF</text></svg></button>
    </div>
    <button aria-label="MISA SME.NET" class="ml-[5px] w-12 border-r-4 border-b-2 border-[#0d4b80] border-b-[#89bdec] bg-[#155e9c]"><svg class="size-6"><use href="#misa"/></svg></button>
    <button aria-label="Trình ghi màn hình" class="ml-[5px] w-10 border-b-2 border-[#89bdec]"><svg class="size-6" viewBox="0 0 24 24"><path d="M2 1h18v22H2z" fill="#f1f1ee"/><path d="M4 3h14v11H4z" fill="#1d4d9e"/><path d="M4 7q5-5 10-3l4 4v5q-8 2-14 0z" fill="#b5cce8"/><path d="M4 9q6 2 14-2v3q-7 3-14 2z" fill="#3566b5"/><path d="M4 16.500h4M4 19h2" stroke="#999"/><path d="M23 9L12 17" stroke="#c21a23" stroke-width="2"/><path d="M13 15.500L8 20l-2 1 5-.500 4-3z" fill="#333"/></svg></button>
  </div>
  <div class="flex items-center bg-linear-to-r from-[#264463] to-[#112b3e]">
    <svg class="mr-[10px] h-[7px] w-3" viewBox="0 0 12 7"><path d="M.5 6.500L6 1l5.500 5.500" fill="none" stroke="#fff" stroke-width="1.200"/></svg>
    <svg class="mr-2 size-4" viewBox="0 0 16 16" fill="none" stroke="#fff"><path d="M5.500 3.500h10v8h-11V7M10 11.500v3M6.500 14.500h7M.5 1.500h4v4h-4zM2.500 5.500v9"/></svg>
    <svg class="mr-2.5 size-4" viewBox="0 0 16 16"><path d="M.5 5.500h2l4-4v12l-4-4h-2z" fill="none" stroke="#fff"/><circle cx="12" cy="11.500" r="4" fill="#e3262d"/><path d="M10.500 10l3 3m0-3l-3 3" stroke="#fff"/></svg>
    <span class="mr-3">ENG</span>
    <div class="w-[54px] text-center leading-[18px]">10:47 AM<br>18/2/2021</div>
    <svg class="mr-3 ml-[17px] h-6 w-6" viewBox="0 0 24 24"><path d="M0 1h16v13H9l-4 4v-4H0z" fill="#fff"/><path d="M3 4.500h10M3 7.500h10M3 10.500h7" stroke="#16344c"/><circle cx="16" cy="16" r="7.500" fill="#175385" stroke="#4d82ab"/><text x="16" y="20" text-anchor="middle" font-size="11" font-weight="bold" fill="#fff">2</text></svg>
    <span class="mr-1 h-full w-px bg-[#7c8d9b]"></span>
  </div>
</div>

<script>
  // Fill the grids with empty rows.
  const blank = document.getElementById('blank-row');
  blank.removeAttribute('id');
  for (let i = 0; i < 8; i++) blank.after(blank.cloneNode(true));
  const list = document.getElementById('list-rows');
  for (let i = 0; i < 10; i++) list.append(document.createElement('div'));
  const detail = document.getElementById('detail-rows');
  for (let i = 0; i < 18; i++) detail.append(document.createElement('div'));
</script>
</body>
</html>
